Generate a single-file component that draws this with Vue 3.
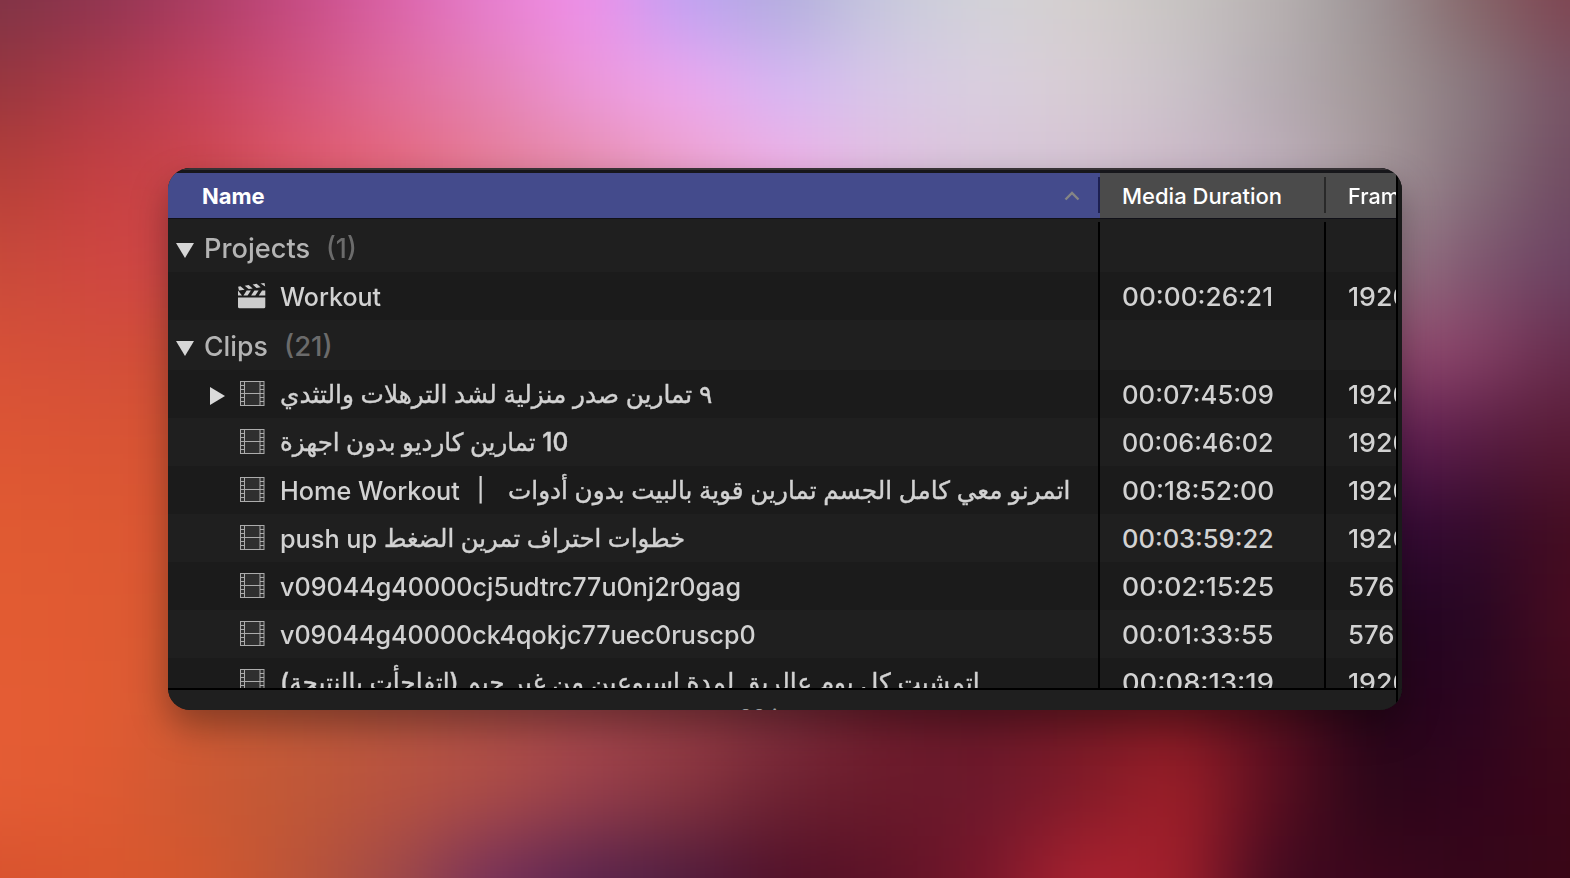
<script setup>
import { ref, onMounted, nextTick } from 'vue'

const STEP_X = 98
const STEP_Y = 88
const mesh = [
  '7f3446 8f3450 a93c62 c44a82 da62a8 e67fd0 f090ea bda2f4 b0acdc c6c8dc d2d2d8 d4cfce c8c4c2 b8b2b2 9c9496 866669 7f4350',
  '98363e ae3a48 c4405a d2527a e06c9a e582b4 ec98da f0a8f0 d6b8f6 d8c8e8 dacfe0 d8cdd4 cbc3ca b5acb2 a39898 8a7a80 775264',
  'b53f38 c43f42 cc464a de5866 e46678 e57c94 e68ca8 eca0c8 f2aee4 e2bee0 d8c4d8 d4c2d4 ccb8c8 bfaebc a79a9e 87727c 704a60',
  'c84a3a cf4640 cc464a de5866 e46678 e57c94 e490a8 eaa4c4 eeaee0 e0bede d8c4d8 d4c2d4 ccb8c8 bfaebc a08490 805870 6b4262',
  'd65038 d34e3a cf4f38 cf4f38 cf4f38 b05048 b05048 b05048 b05048 b05048 905070 905070 905070 905070 984e72 884268 662c4c',
  'dc5534 da5434 d45434 d45232 d45232 b05048 b05048 b05048 b05048 b05048 701850 701850 701850 701850 66205a 581c44 581a34',
  'e05a32 de5832 d85634 d45634 d45634 b05048 b05048 a8484c 983e46 82303e 701e2e 681828 741a26 5a1020 360a3a 320a2c 440c20',
  'e25b32 e05a32 d45832 c0583c b85640 b05048 a8484c 983e46 82303e 701e2e 681828 741a26 7e1a24 5a1020 260622 240622 4a0c20',
  'e45c34 e25b32 d05c34 c25a3c b85640 b05048 a8484c 983e46 82303e 701e2e 681828 741a26 7e1a24 5a1020 26051a 2a0420 400a1a',
  'e45c34 e05a32 cc5833 c05836 b8523f ac4c46 983f4a 86343e 6e2232 6a1a2a 6c182c 801a28 a01f28 5a0e20 2a0618 32041c 3c0618',
  'd8522e da562e d4582e bc5438 a04a48 74305a 58244e 4e1c3e 501028 5c1226 76162a ac2230 a4202c 400a20 3c061c 34061a 3a0616',
]
const cells = mesh.flatMap((line, r) =>
  line.split(' ').map((c, i, all) => {
    const x0 = i === 0 ? -300 : (i - 0.5) * STEP_X
    const x1 = i === all.length - 1 ? 1900 : (i + 0.5) * STEP_X
    const y0 = r === 0 ? -300 : (r - 0.5) * STEP_Y
    const y1 = r === mesh.length - 1 ? 1200 : (r + 0.5) * STEP_Y
    return { key: r + '-' + i, x: x0, y: y0, w: x1 - x0 + 1, h: y1 - y0 + 1, fill: '#' + c }
  })
)

// Each name is a list of runs; `w` is the width the run takes in the column.
const rows = [
  { group: 'Projects', gw: 106, count: '(1)', cw: 31 },
  { icon: 'clapper', runs: [{ t: 'Workout', w: 101 }], dur: '00:00:26:21', dw: 151, size: '1920' },
  { group: 'Clips', gw: 64, count: '(21)', cw: 49 },
  { icon: 'film', open: true, runs: [{ t: '٩ تمارين صدر منزلية لشد الترهلات والتثدي', w: 432, ar: true }], dur: '00:07:45:09', dw: 152, size: '1920' },
  { icon: 'film', runs: [{ t: '10 تمارين كارديو بدون اجهزة', w: 288, ar: true }], dur: '00:06:46:02', dw: 152, size: '1920' },
  { icon: 'film', runs: [{ t: 'Home Workout', w: 180, gap: 15 }, { t: '|', w: 11, gap: 22, bar: true }, { t: 'اتمرنو معي كامل الجسم تمارين قوية بالبيت بدون أدوات', w: 562, ar: true }], dur: '00:18:52:00', dw: 152, size: '1920' },
  { icon: 'film', runs: [{ t: 'push up', w: 97, gap: 7 }, { t: 'خطوات احتراف تمرين الضغط', w: 301, ar: true }], dur: '00:03:59:22', dw: 152, size: '1920' },
  { icon: 'film', runs: [{ t: 'v09044g40000cj5udtrc77u0nj2r0gag', w: 461 }], dur: '00:02:15:25', dw: 152, size: '576' },
  { icon: 'film', runs: [{ t: 'v09044g40000ck4qokjc77uec0ruscp0', w: 476 }], dur: '00:01:33:55', dw: 152, size: '576' },
  { icon: 'film', runs: [{ t: 'اتمشيت كل يوم عالريق لمدة اسبوعين من غير جيم (اتفاجأت بالنتيجة)', w: 700, ar: true }], dur: '00:08:13:19', dw: 152, size: '1920' },
]

const root = ref(null)
function fit() {
  root.value.querySelectorAll('[data-w]').forEach((box) => {
    const inner = box.firstElementChild
    const natural = inner.offsetWidth
    if (natural) inner.style.transform = `scaleX(${Number(box.dataset.w) / natural})`
  })
}
onMounted(async () => {
  await nextTick()
  fit()
  document.fonts.ready.then(fit)
})
</script>

<template>
  <main ref="root" class="desktop">
    <svg class="wallpaper" viewBox="0 0 1570 878" width="1570" height="878">
      <defs>
        <filter id="soft" filterUnits="userSpaceOnUse" x="-200" y="-200" width="1970" height="1278" color-interpolation-filters="sRGB">
          <feGaussianBlur stdDeviation="42 38" />
        </filter>
      </defs>
      <g filter="url(#soft)" shape-rendering="crispEdges">
        <rect v-for="c in cells" :key="c.key" :x="c.x" :y="c.y" :width="c.w" :height="c.h" :fill="c.fill" />
      </g>
    </svg>

    <section class="window">
      <div class="rim"></div>
      <div class="table">
        <header class="head">
          <div class="cell name sorted">
            <span class="fit" data-w="63"><b>Name</b></span>
            <svg class="caret" width="16" height="10" viewBox="0 0 16 10"><path d="M1.500 8.500 8 2l6.500 6.500" fill="none" stroke="#858585" stroke-width="2.400" /></svg>
          </div>
          <div class="cell dur"><span class="fit" data-w="160"><span>Media Duration</span></span></div>
          <div class="cell size"><span class="fit" data-w="114"><span>Frame Size</span></span></div>
        </header>
        <div class="body">
          <div v-for="(r, i) in rows" :key="i" class="row" :class="{ group: r.group, first: i === 0, odd: i % 2 }">
            <div v-if="r.group" class="cell name">
              <svg class="tri" width="18" height="15" viewBox="0 0 18 15"><path d="M0 0h18L9 15z" fill="#d6d6d6" /></svg>
              <span class="fit title" :data-w="r.gw" :style="{ width: r.gw + 'px' }"><span>{{ r.group }}</span></span>
              <span class="fit count" :data-w="r.cw" :style="{ width: r.cw + 'px' }"><span>{{ r.count }}</span></span>
            </div>
            <div v-else class="cell name">
              <span class="twist">
                <svg v-if="r.open" width="15" height="18" viewBox="0 0 15 18"><path d="M0 0v18L15 9z" fill="#dadada" /></svg>
              </span>
              <svg v-if="r.icon === 'film'" class="film" width="25" height="26" viewBox="0 0 25 26">
                <rect x=".5" y=".5" width="23.500" height="24" fill="#2f2f2f" stroke="#acacac" />
                <path d="M4.500 .5v24M20 .5v24M4.500 12.500H20" fill="none" stroke="#acacac" />
                <path d="M.5 4.500h4M.5 8.500h4M.5 12.500h4M.5 16.500h4M.5 20.500h4M20 4.500h4M20 8.500h4M20 12.500h4M20 16.500h4M20 20.500h4" stroke="#acacac" />
              </svg>
              <svg v-else class="clapper" width="28" height="26" viewBox="0 0 28 26">
                <g fill="#cdcdcd">
                  <path d="M0 14.500h27.300v9.300q0 1.500-1.500 1.500H1.500Q0 25.300 0 23.800z" />
                  <path d="M0 7.600 4 12.400H0zM5.400 12.400 8.700 7.600h4.200L9.600 12.400zM13.100 12.400l3.300-4.800h4.200l-3.300 4.800zM20.800 12.400l3.300-4.800h3.200v4.800z" />
                  <path d="M.1 3.800 2.500 3.300 6.600 6.700 1 7.600zM6.700 2.700l4-.7 4 3.500-4 .6zM14.600 1.500l4-.7 4 3.500-4 .6zM22.500.5 26.500 0 27.200 3.600z" />
                </g>
              </svg>
              <span v-for="(p, k) in r.runs" :key="k" class="fit run" :class="{ ar: p.ar, bar: p.bar }" :data-w="p.w" :style="{ width: p.w + 'px', marginRight: (p.gap || 0) + 'px' }">
                <bdi :dir="p.ar ? 'rtl' : 'ltr'">{{ p.t }}</bdi>
              </span>
            </div>
            <div class="cell dur"><span v-if="r.dur" class="fit" :data-w="r.dw"><span>{{ r.dur }}</span></span></div>
            <div class="cell size"><span v-if="r.size" class="fit" :data-w="r.size.length * 15.500"><span>{{ r.size }}</span></span></div>
          </div>
        </div>
      </div>
      <footer class="foot"><span>22 items</span></footer>
      <i class="edge"></i>
    </section>
  </main>
</template>

<style>
html, body { margin: 0; overflow: hidden; background: #1c1c1c; }
</style>

<style scoped>
.desktop {
  position: relative;
  width: 1570px;
  height: 878px;
  overflow: hidden;
  padding: 168px;
  box-sizing: border-box;
  font-family: Inter, "DejaVu Sans", sans-serif;
  color: #d2d2d2;
}
.wallpaper { position: absolute; inset: 0; }
.window {
  position: relative;
  width: 1234px;
  height: 542px;
  border-radius: 22px;
  overflow: hidden;
  background: #1c1c1c;
  box-shadow: 0 16px 36px rgba(0, 0, 0, .34);
  display: flex;
  flex-direction: column;
}
.rim { height: 3px; border-top: 2px solid #373235; background: #17171b; flex: none; }
.table { height: 515px; width: 1228px; overflow: hidden; flex: none; }
.head, .row { display: grid; grid-template-columns: 932px 226px 70px; }
.head {
  height: 45px;
  border-bottom: 1px solid #111118;
  background: #4b4b4b;
  color: #fff;
  font-size: 22px;
  font-weight: 550;
}
.cell { display: flex; align-items: center; min-width: 0; overflow: hidden; white-space: nowrap; }
.dur, .size { padding-left: 22px; }
.sorted { background: #444b8c; padding-left: 34px; justify-content: space-between; }
.sorted b { font-weight: 700; }
.caret { margin-right: 20px; }
.head .sorted, .head .dur { position: relative; }
.head .sorted::after, .head .dur::after {
  content: "";
  position: absolute;
  right: 0;
  top: 4px;
  width: 2px;
  height: 36px;
  background: #292929;
}
.head .sorted::after { background: #1d2052; }
.body { position: relative; font-size: 25.500px; font-weight: 500; height: 469px; overflow: hidden; background: #1f1f1f; }
.body::before, .body::after {
  content: "";
  position: absolute;
  z-index: 1;
  top: 3px;
  bottom: 0;
  left: 930px;
  width: 2px;
  background: #000;
}
.body::after { left: 1156px; }
.row { height: 48px; background: #1f1f1f; }
.row.odd { background: #1b1b1b; }
.row.group { height: 50px; font-size: 27.500px; }
.row.group .name { padding-top: 2px; }
.row.first { height: 53px; }
.row.group.first .name { padding-top: 4px; }
.tri { margin: 5px 10px 0 8px; flex: none; }
.title { color: #b4b4b4; margin-right: 16px; }
.count { color: #6b6b6b; font-weight: 450; }
.twist { width: 28px; padding: 3px 0 0 42px; flex: none; display: flex; }
.film { margin: 0 15px 0 2px; flex: none; }
.clapper { margin: 0 14px 0 0; flex: none; }
.fit { display: inline-block; flex: none; }
.fit > * { display: inline-block; transform-origin: left center; white-space: pre; }
.ar { font-size: 25px; -webkit-text-stroke: .4px currentColor; }
.bar { font-size: 23px; font-weight: 300; }
.foot {
  height: 20px;
  border-top: 2px solid #000;
  background: #1f1f1f;
  color: #a0a0a0;
  font-size: 22px;
  line-height: 26px;
  display: flex;
  justify-content: center;
  overflow: hidden;
}
.foot span { padding-top: 14px; margin-right: 3px; }
.edge {
  position: absolute;
  top: 5px;
  bottom: 0;
  right: 0;
  width: 4px;
  border-left: 2px solid #000;
  background: #1b1b1b;
}
</style>
